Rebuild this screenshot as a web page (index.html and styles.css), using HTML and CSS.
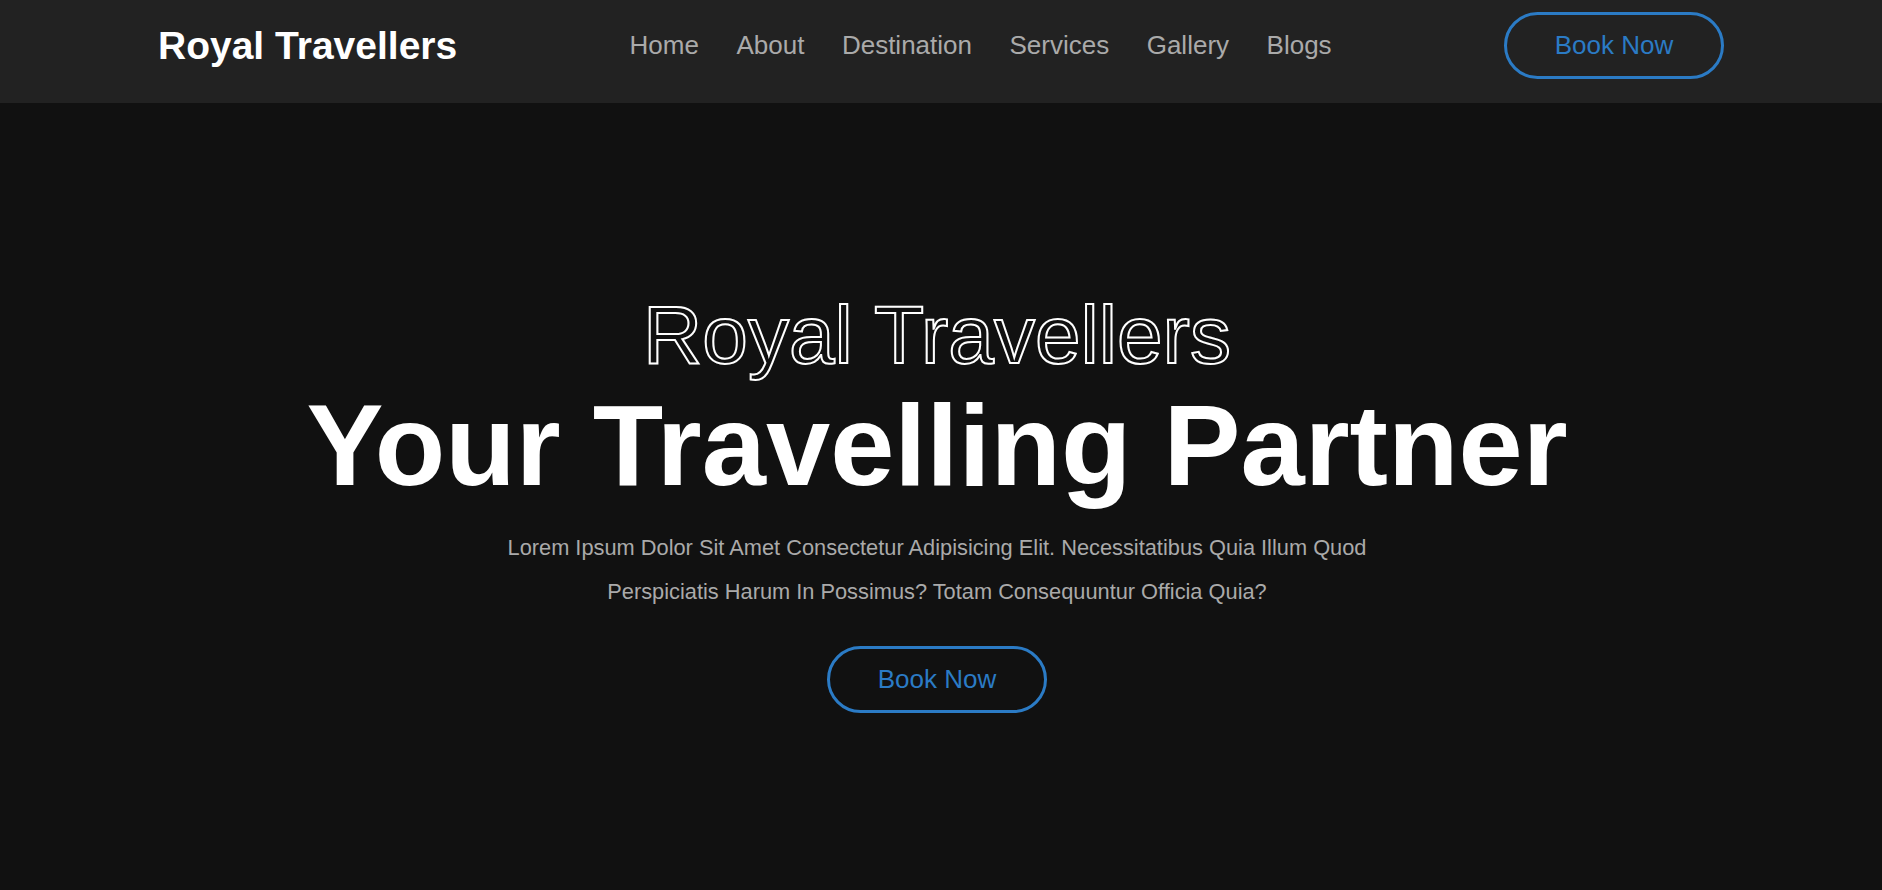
FILE: index.html
```html
<!DOCTYPE html>
<html lang="en">
<head>
<meta charset="utf-8">
<title>Royal Travellers</title>
<link rel="stylesheet" href="styles.css">
</head>
<body>
<header class="header">
  <a class="logo" href="#">Royal Travellers</a>
  <nav class="nav">
    <a href="#">Home</a>
    <a href="#">About</a>
    <a href="#">Destination</a>
    <a href="#">Services</a>
    <a href="#">Gallery</a>
    <a href="#">Blogs</a>
  </nav>
  <a class="btn" href="#">Book Now</a>
</header>
<section class="hero">
  <h3 class="hero-outline">Royal Travellers</h3>
  <h1 class="hero-title">Your Travelling Partner</h1>
  <p class="hero-text">Lorem Ipsum Dolor Sit Amet Consectetur Adipisicing Elit. Necessitatibus Quia Illum Quod Perspiciatis Harum In Possimus? Totam Consequuntur Officia Quia?</p>
  <a class="btn" href="#">Book Now</a>
</section>
</body>
</html>
```

FILE: styles.css
```css
* {
  margin: 0;
  padding: 0;
  box-sizing: border-box;
}

html, body {
  background: #111111;
  font-family: "Liberation Sans", Arial, sans-serif;
}

a {
  text-decoration: none;
}

.header {
  display: flex;
  align-items: center;
  justify-content: space-between;
  background: #222222;
  padding: 12px 158px 24px;
}

.logo {
  color: #ffffff;
  font-weight: 700;
  font-size: 39px;
}

.nav {
  display: flex;
  gap: 37.5px;
}

.nav a {
  color: #aaaaaa;
  font-size: 26px;
}

.btn {
  display: inline-block;
  color: #2b7bc5;
  border: 3px solid #2b7bc5;
  border-radius: 50px;
  font-size: 26px;
  line-height: 33px;
  padding: 14px 47px;
  width: 220px;
  text-align: center;
}

.hero {
  min-height: 787px;
  display: flex;
  flex-direction: column;
  align-items: center;
  justify-content: center;
  text-align: center;
  padding: 9px 8px 0 0;
}

.hero-outline {
  font-size: 82px;
  line-height: 91px;
  font-weight: 400;
  color: transparent;
  -webkit-text-stroke: 2px #ffffff;
}

.hero-title {
  font-size: 115.4px;
  line-height: 131px;
  font-weight: 700;
  color: #ffffff;
}

.hero-text {
  margin-top: 15px;
  max-width: 920px;
  color: #aaaaaa;
  font-size: 21.8px;
  line-height: 44px;
}

.hero .btn {
  margin-top: 32px;
}
```
